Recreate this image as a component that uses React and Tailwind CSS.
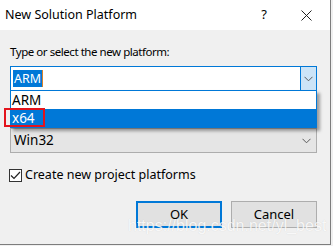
import React from 'react';

const Chevron = ({ className }) => (
    <svg width="9" height="6" viewBox="0 0 9 6" className={className}>
        <path d="M0.5 0.8 L4.5 4.8 L8.5 0.8" fill="none" stroke="#5a5a5a" strokeWidth="1" />
    </svg>
);

const App = () => {
    return (
        <div className="w-[333px] h-[246px] bg-[#f0f0f0] font-['Noto_Sans',sans-serif] text-black overflow-hidden">
            <div className="relative w-[331px] h-[245px] border-r border-b border-[#7d7d7d] bg-[#f0f0f0] flex flex-col">
                {/* title bar */}
                <div className="h-[30px] bg-white flex items-center pl-[5px] pr-[18px] text-[12.5px]">
                    <span className="flex-1">New Solution Platform</span>
                    <span className="mr-[34px] text-[13px]">?</span>
                    <svg width="11" height="11" viewBox="0 0 11 11">
                        <path d="M0.5 0.5 L10.5 10.5 M10.5 0.5 L0.5 10.5" stroke="#222" strokeWidth="1" />
                    </svg>
                </div>

                {/* body */}
                <div className="flex flex-col px-[10px] pt-[14px] text-[12px]">
                    <div className="h-[16px] leading-[16px] text-[11.5px] tracking-[-0.45px]">Type or select the new platform:</div>

                    <div className="relative mt-[6px] w-[307px] h-[25px] bg-white border border-[#0078d7] flex items-center">
                        <div className="ml-[2px] flex items-center h-[17px]">
                            <span className="bg-[#0078d7] text-white text-[12.5px] leading-[17px] px-[1px]">ARM</span>
                            <span className="w-px h-[17px] bg-[#d9822b]" />
                        </div>
                        <div className="ml-auto w-[16px] h-full bg-[#cce4f7] border-l border-[#0078d7] flex items-center justify-center">
                            <Chevron />
                        </div>

                        {/* open list */}
                        <div className="absolute left-[-1px] top-[23px] w-[307px] bg-white border border-[#0078d7] shadow-[3px_3px_3px_rgba(0,0,0,0.35)] z-10 text-[13.5px]">
                            <div className="h-[18px] leading-[18px] pl-[1px]">ARM</div>
                            <div className="h-[18px] leading-[18px] pl-[1px] bg-[#0078d7] text-white">x64</div>
                        </div>
                    </div>

                    {/* label of the second field, hidden under the open list */}
                    <div className="mt-[8px] h-[16px]" />

                    <div className="mt-[13px] w-[307px] h-[25px] bg-[#e5e5e5] border border-[#adadad] flex items-center pl-[3px] pr-[5px] text-[13.5px]">
                        <span className="flex-1">Win32</span>
                        <Chevron />
                    </div>

                    <div className="mt-[14px] flex items-center -ml-[1px]">
                        <div className="w-[13px] h-[13px] border border-[#333] bg-white flex items-center justify-center">
                            <svg width="11" height="9" viewBox="0 0 11 9">
                                <path d="M1 4.5 L4 7.5 L10 1" fill="none" stroke="#222" strokeWidth="1.2" />
                            </svg>
                        </div>
                        <span className="ml-[3px] text-[12.5px] leading-[16px]">Create new project platforms</span>
                    </div>

                    <div className="mt-[18px] flex justify-end gap-[9px] pr-[3px]">
                        <button className="w-[86px] h-[27px] bg-[#e1e1e1] border-2 border-[#0078d7] text-[13px]">OK</button>
                        <button className="w-[86px] h-[27px] bg-[#e1e1e1] border border-[#adadad] text-[13px]">Cancel</button>
                    </div>
                </div>

                {/* red highlight box around x64 */}
                <div className="absolute left-[4px] top-[108px] w-[41px] h-[19px] border-2 border-[#e3141c] z-20" />

                {/* watermark */}
                <div className="absolute left-[128px] top-[217px] text-[16px] leading-[18px] font-['Liberation_Sans',sans-serif] text-white/85 [text-shadow:0_0_1px_rgba(0,0,0,0.15)] z-20">
                    https://blog.csdn.net/yl_best
                </div>
            </div>
        </div>
    );
};

export default App;
